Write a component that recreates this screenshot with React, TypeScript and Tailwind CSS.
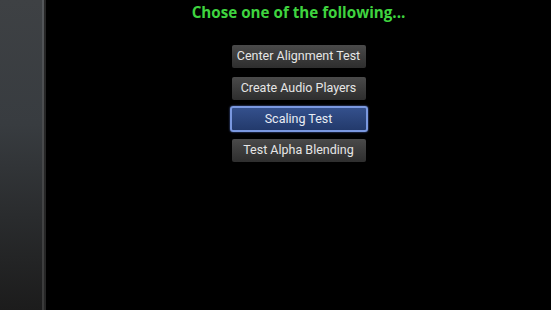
const items = [
  { label: "Center Alignment Test", mt: "mt-[22px]" },
  { label: "Create Audio Players", mt: "mt-[9px]" },
];

export default function App() {
  return (
    <div className="flex h-[310px] w-[551px] bg-black font-['Open_Sans','Noto_Sans',sans-serif]">
      <SidePanel />
      <div className="flex flex-1 flex-col items-center">
        <h1 className="pt-[1px] text-[15.2px] leading-[22px] font-bold text-[#3fd43f]">
          Chose one of the following...
        </h1>
        {items.map((it) => (
          <MenuButton key={it.label} label={it.label} className={it.mt} />
        ))}
        <button className="mt-[6px] flex h-[26px] w-[138px] items-center justify-center rounded-[3px] border-2 border-[#7a98e0] bg-gradient-to-b from-[#34508c] to-[#233a6c] font-['Roboto',sans-serif] text-[12.5px] text-[#e8ecf4] shadow-[0_0_2px_#5c7cd0]">
          Scaling Test
        </button>
        <MenuButton label="Test Alpha Blending" className="mt-[7px]" />
      </div>
    </div>
  );
}

const SidePanel = () => (
  <div className="flex h-full w-[46px]">
    <div className="h-full w-[42px] bg-gradient-to-b from-[#3e4144] via-[#383c40] via-40% to-[#1c1c1c]" />
    <div className="h-full w-[2px] bg-gradient-to-b from-[#55585b] to-[#3a3a3a]" />
    <div className="h-full w-[2px] bg-[#262626]" />
  </div>
);

const MenuButton = ({ label, className }: { label: string; className?: string }) => (
  <button
    className={`flex h-[23px] w-[134px] items-center justify-center rounded-[2px] bg-gradient-to-b from-[#4a4a4a] to-[#2e2e2e] font-['Roboto',sans-serif] text-[12.5px] text-[#e6e6e6] ${className ?? ""}`}
  >
    {label}
  </button>
);
